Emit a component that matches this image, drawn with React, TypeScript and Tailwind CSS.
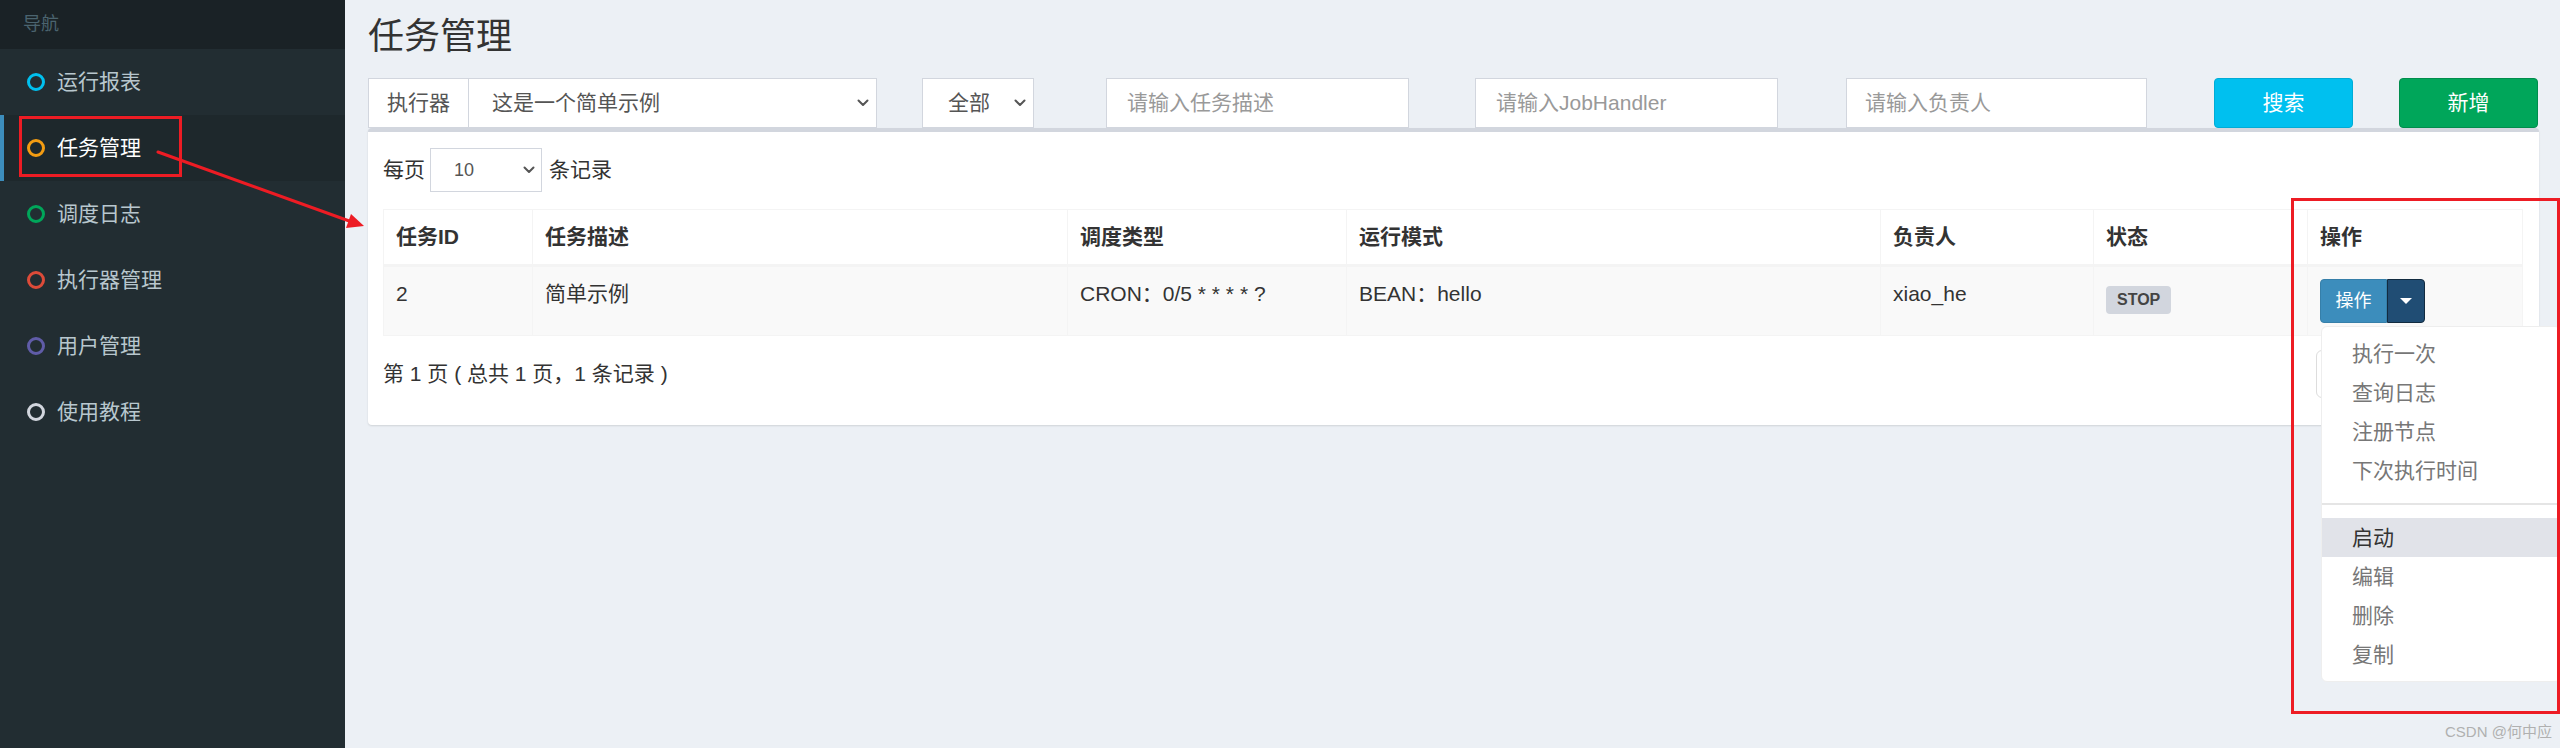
import React from "react";

const Chevron = ({ color = "#555" }: { color?: string }) => (
  <svg width="12" height="8" viewBox="0 0 12 8" className="shrink-0">
    <path d="M1.5 1.5 L6 6 L10.5 1.5" fill="none" stroke={color} strokeWidth="2" strokeLinecap="round" strokeLinejoin="round" />
  </svg>
);

const navItems = [
  { label: "运行报表", color: "border-[#00c0ef]", active: false },
  { label: "任务管理", color: "border-[#f39c12]", active: true },
  { label: "调度日志", color: "border-[#00a65a]", active: false },
  { label: "执行器管理", color: "border-[#dd4b39]", active: false },
  { label: "用户管理", color: "border-[#605ca8]", active: false },
  { label: "使用教程", color: "border-[#d2d6de]", active: false },
];

const cols = [
  { w: "w-[149px]", h: "任务ID" },
  { w: "w-[535px]", h: "任务描述" },
  { w: "w-[279px]", h: "调度类型" },
  { w: "w-[534px]", h: "运行模式" },
  { w: "w-[213px]", h: "负责人" },
  { w: "w-[214px]", h: "状态" },
  { w: "w-[216px]", h: "操作" },
];

export default function App() {
  return (
    <div className="relative flex w-[2560px] h-[748px] overflow-hidden font-['Liberation_Sans','Noto_Sans_CJK_SC',sans-serif] text-[#333]">
      {/* Sidebar */}
      <aside className="w-[345px] shrink-0 bg-[#222d32] flex flex-col">
        <div className="h-[49px] bg-[#1a2226] pl-[23px] flex items-center text-[18px] text-[#4b646f]">导航</div>
        {navItems.map((it) => (
          <div
            key={it.label}
            className={
              it.active
                ? "h-[66px] flex items-center bg-[#1e282c] border-l-[4px] border-[#3c8dbc] pl-[23px]"
                : "h-[66px] flex items-center border-l-[4px] border-transparent pl-[23px]"
            }
          >
            <span className={"w-[18px] h-[18px] rounded-full border-[3px] " + it.color} />
            <span className={it.active ? "ml-[12px] text-[21px] text-white" : "ml-[12px] text-[21px] text-[#b8c7ce]"}>{it.label}</span>
          </div>
        ))}
      </aside>

      {/* Main */}
      <main className="flex-1 bg-[#ecf0f5] pl-[23px] pr-[21px] pt-[17px]">
        <h1 className="text-[36px] leading-[40px] text-[#333] m-0">任务管理</h1>

        {/* filter row */}
        <div className="mt-[21px] h-[50px] flex">
          <div className="w-[509px] flex">
            <div className="w-[101px] bg-white border border-[#d2d6de] flex items-center justify-center text-[21px] text-[#555]">执行器</div>
            <div className="flex-1 bg-white border border-l-0 border-[#d2d6de] pl-[23px] pr-[7px] flex items-center justify-between text-[21px] text-[#555]">
              <span>这是一个简单示例</span>
              <Chevron />
            </div>
          </div>
          <div className="ml-[45px] w-[112px] bg-white border border-[#d2d6de] pl-[25px] pr-[7px] flex items-center justify-between text-[21px] text-[#555]">
            <span>全部</span>
            <Chevron />
          </div>
          <div className="ml-[72px] w-[303px] bg-white border border-[#d2d6de] pl-[20px] flex items-center text-[21px] text-[#999]">请输入任务描述</div>
          <div className="ml-[66px] w-[303px] bg-white border border-[#d2d6de] pl-[20px] flex items-center text-[21px] text-[#999]">请输入JobHandler</div>
          <div className="ml-[68px] w-[301px] bg-white border border-[#d2d6de] pl-[18px] flex items-center text-[21px] text-[#999]">请输入负责人</div>
          <div className="ml-[67px] w-[139px] bg-[#00c0ef] border border-[#00acd6] rounded-[4px] flex items-center justify-center text-[21px] text-white">搜索</div>
          <div className="ml-[46px] w-[139px] bg-[#00a65a] border border-[#008d4c] rounded-[4px] flex items-center justify-center text-[21px] text-white">新增</div>
        </div>

        {/* box */}
        <div className="h-[297px] bg-white border-t-[4px] border-[#d2d6de] rounded-[4px] shadow-[0_1px_2px_rgba(0,0,0,0.12)] px-[15px] pt-[16px]">
          <div className="flex items-center text-[21px] text-[#333]">
            <span>每页</span>
            <div className="ml-[5px] w-[112px] h-[44px] border border-[#d2d6de] pl-[23px] pr-[6px] flex items-center justify-between text-[18px] text-[#555]">
              <span>10</span>
              <Chevron />
            </div>
            <span className="ml-[7px]">条记录</span>
          </div>

          {/* table */}
          <div className="mt-[17px] w-[2140px] border border-[#f4f4f4]">
            <div className="flex h-[57px] border-b-[3px] border-[#f4f4f4]">
              {cols.map((c, i) => (
                <div key={c.h} className={c.w + " shrink-0 px-[12px] flex items-center font-bold text-[21px] text-[#333]" + (i < 6 ? " border-r border-[#f4f4f4]" : "")}>
                  {c.h}
                </div>
              ))}
            </div>
            <div className="flex h-[68px] bg-[#f9f9f9] text-[21px] text-[#333]">
              <div className="w-[149px] shrink-0 px-[12px] pt-[12px] leading-[30px] border-r border-[#f4f4f4]">2</div>
              <div className="w-[535px] shrink-0 px-[12px] pt-[12px] leading-[30px] border-r border-[#f4f4f4]">简单示例</div>
              <div className="w-[279px] shrink-0 px-[12px] pt-[12px] leading-[30px] border-r border-[#f4f4f4]">CRON：0/5 * * * * ?</div>
              <div className="w-[534px] shrink-0 px-[12px] pt-[12px] leading-[30px] border-r border-[#f4f4f4]">BEAN：hello</div>
              <div className="w-[213px] shrink-0 px-[12px] pt-[12px] leading-[30px] border-r border-[#f4f4f4]">xiao_he</div>
              <div className="w-[214px] shrink-0 px-[12px] pt-[15px] border-r border-[#f4f4f4]">
                <span className="inline-flex items-center h-[28px] px-[11px] rounded-[4px] bg-[#d2d6de] text-[#444] text-[16px] font-bold leading-none">STOP</span>
              </div>
              <div className="w-[216px] shrink-0 px-[12px] pt-[12px]">
                <div className="relative inline-flex h-[44px]">
                  <div className="w-[67px] h-[44px] bg-[#3c8dbc] border border-[#367fa9] rounded-l-[4px] flex items-center justify-center text-[18px] text-white">操作</div>
                  <div className="w-[38px] h-[44px] bg-[#204d74] border border-[#122b40] rounded-r-[4px] flex items-center justify-center">
                    <svg width="12" height="6" viewBox="0 0 12 6">
                      <polygon points="0,0 12,0 6,6" fill="#fff" />
                    </svg>
                  </div>
                  {/* dropdown menu */}
                  <div className="absolute left-[1px] top-[47px] z-10 w-[240px] bg-white border border-[#eee] rounded-[6px] pt-[7px] pb-[7px] text-[21px]">
                    {["执行一次", "查询日志", "注册节点", "下次执行时间"].map((t) => (
                      <div key={t} className="h-[39px] leading-[39px] px-[30px] text-[#777]">{t}</div>
                    ))}
                    <div className="h-[2px] bg-[#e5e5e5] my-[13px]" />
                    <div className="h-[39px] leading-[39px] px-[30px] text-[#333] bg-[#e1e3e9]">启动</div>
                    {["编辑", "删除", "复制"].map((t) => (
                      <div key={t} className="h-[39px] leading-[39px] px-[30px] text-[#777]">{t}</div>
                    ))}
                  </div>
                </div>
              </div>
            </div>
          </div>

          {/* footer */}
          <div className="mt-[14px] w-[2140px] h-[48px] flex items-center justify-between">
            <span className="text-[21px] text-[#333]">第 1 页 ( 总共 1 页，1 条记录 )</span>
            <div className="w-[207px] h-[48px] border border-[#ddd] rounded-[6px] flex">
              <div className="flex-1 border-r border-[#ddd] flex items-center justify-center text-[21px] text-[#777]">上页</div>
              <div className="flex-1 flex items-center justify-center text-[21px] text-[#777]">下页</div>
            </div>
          </div>
        </div>
      </main>

      {/* annotations */}
      <div className="absolute left-[19px] top-[116px] w-[163px] h-[61px] border-[3px] border-[#ed1c24] pointer-events-none" />
      <div className="absolute left-[2291px] top-[198px] w-[269px] h-[516px] border-[3px] border-[#ed1c24] pointer-events-none z-20" />
      <svg className="absolute left-0 top-0 pointer-events-none z-20" width="400" height="260" viewBox="0 0 400 260">
        <line x1="158" y1="152" x2="352" y2="222" stroke="#ed1c24" strokeWidth="3" strokeLinecap="round" />
        <polygon points="364,226 346,228 351,214" fill="#ed1c24" />
      </svg>
      <div className="absolute left-[2445px] top-[721px] text-[15px] text-[#b0b0b0] whitespace-nowrap">CSDN @何中应</div>
    </div>
  );
}
